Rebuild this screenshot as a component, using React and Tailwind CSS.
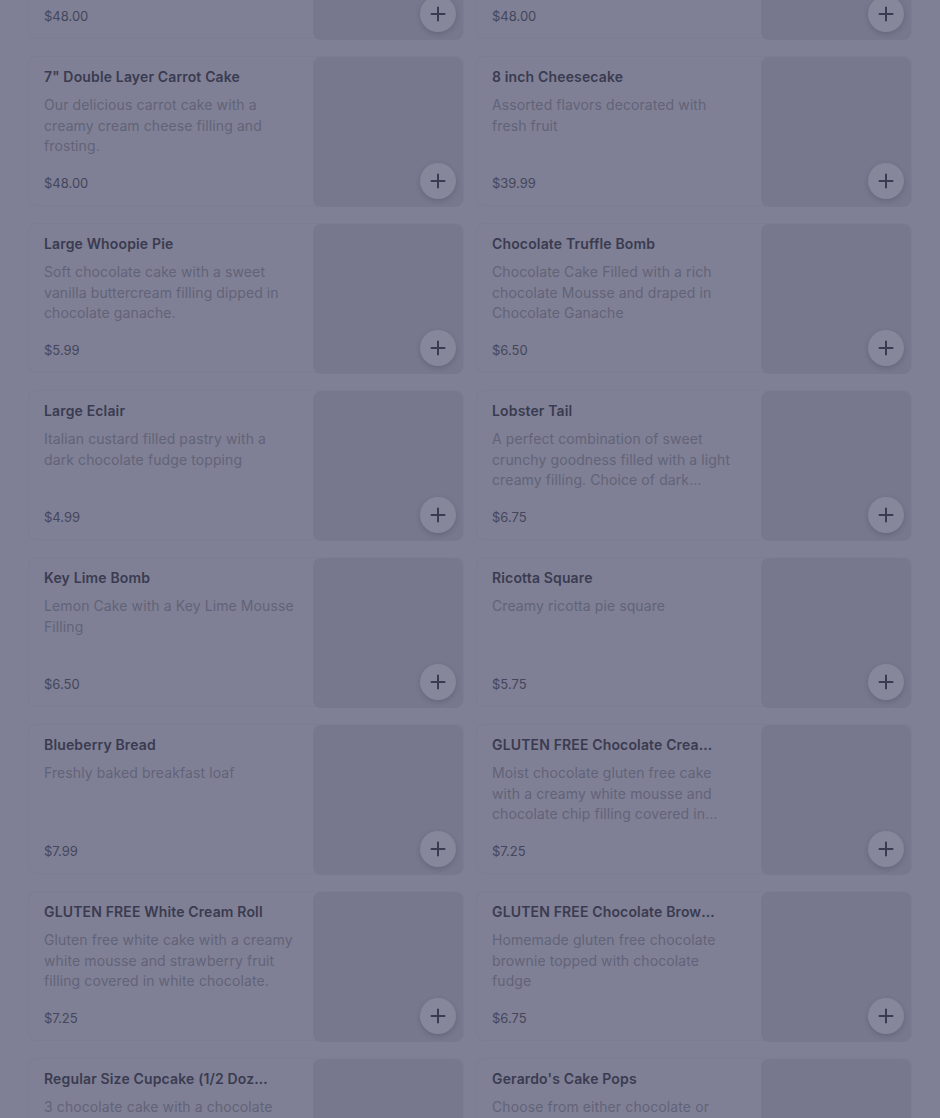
import React from "react";

const items = [
  ["Double Layer Chocolate Cake", "Rich chocolate cake layered with a creamy chocolate filling.", "$48.00"],
  ["Double Layer Vanilla Cake", "Vanilla cake layered with a creamy vanilla filling.", "$48.00"],
  ["7\" Double Layer Carrot Cake", "Our delicious carrot cake with a creamy cream cheese filling and frosting.", "$48.00"],
  ["8 inch Cheesecake", "Assorted flavors decorated with fresh fruit", "$39.99"],
  ["Large Whoopie Pie", "Soft chocolate cake with a sweet vanilla buttercream filling dipped in chocolate ganache.", "$5.99"],
  ["Chocolate Truffle Bomb", "Chocolate Cake Filled with a rich chocolate Mousse and draped in Chocolate Ganache", "$6.50"],
  ["Large Eclair", "Italian custard filled pastry with a dark chocolate fudge topping", "$4.99"],
  ["Lobster Tail", "A perfect combination of sweet crunchy goodness filled with a light creamy filling. Choice of dark chocolate or vanilla.", "$6.75"],
  ["Key Lime Bomb", "Lemon Cake with a Key Lime Mousse Filling", "$6.50"],
  ["Ricotta Square", "Creamy ricotta pie square", "$5.75"],
  ["Blueberry Bread", "Freshly baked breakfast loaf", "$7.99"],
  ["GLUTEN FREE Chocolate Cream Roll", "Moist chocolate gluten free cake with a creamy white mousse and chocolate chip filling covered in chocolate ganache.", "$7.25"],
  ["GLUTEN FREE White Cream Roll", "Gluten free white cake with a creamy white mousse and strawberry fruit filling covered in white chocolate.", "$7.25"],
  ["GLUTEN FREE Chocolate Brownie", "Homemade gluten free chocolate brownie topped with chocolate fudge", "$6.75"],
  ["Regular Size Cupcake (1/2 Dozen)", "3 chocolate cake with a chocolate frosting and 3 vanilla cake with vanilla frosting", "$18.00"],
  ["Gerardo's Cake Pops", "Choose from either chocolate or vanilla cake pops", "$3.50"],
];

function Card({ title, desc, price }) {
  return (
    <div className="flex h-[150px] rounded-lg border border-[#7c7d92] bg-[#7f8095]">
      <div className="flex min-w-0 flex-1 flex-col pl-[15px] pr-[19px] pt-[9px] pb-[12px]">
        <div className="max-w-[224px] truncate text-[14px] font-semibold leading-[22px] tracking-[0.15px] text-[#3a3b50]">
          {title}
        </div>
        <div className="mt-[7px] line-clamp-3 text-[14px] leading-[20.5px] tracking-[0.1px] text-[#626378]">
          {desc}
        </div>
        <div className="mt-auto text-[13px] leading-[20px] text-[#45465b]">{price}</div>
      </div>
      <div className="relative h-[150px] w-[150px] shrink-0 rounded-lg bg-[#77788d]">
        <div className="absolute bottom-[8px] right-[7px] flex h-[36px] w-[36px] items-center justify-center rounded-full bg-[#86879b] shadow-[0_2px_5px_rgba(50,50,70,0.25)]">
          <svg width="16" height="16" viewBox="0 0 16 16" fill="none">
            <path d="M8 1.5v13M1.5 8h13" stroke="#3a3b50" strokeWidth="2" strokeLinecap="round" />
          </svg>
        </div>
      </div>
    </div>
  );
}

export default function App() {
  return (
    <div className="h-[1118px] w-full overflow-hidden bg-[#7f8095] font-['Inter','Noto_Sans',sans-serif]">
      <div className="mt-[-111px] grid grid-cols-2 gap-x-[12px] gap-y-[17px] px-[28px]">
        {items.map(([t, d, p], i) => (
          <Card key={i} title={t} desc={d} price={p} />
        ))}
      </div>
    </div>
  );
}
